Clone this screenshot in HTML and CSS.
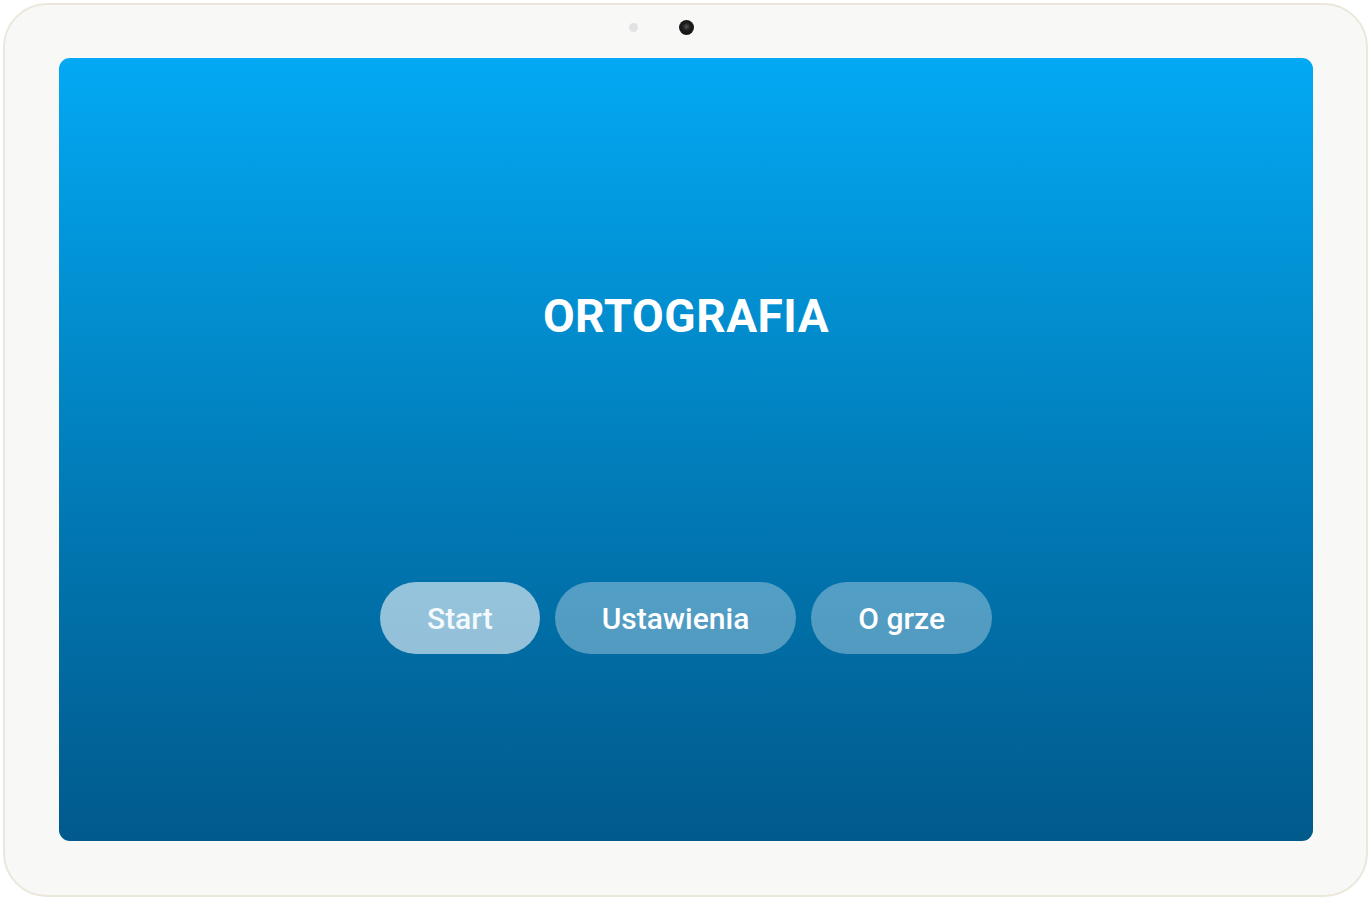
FILE: index.html
```html
<!DOCTYPE html>
<html lang="pl">
<head>
<meta charset="utf-8">
<title>Ortografia</title>
<link rel="stylesheet" href="styles.css">
</head>
<body>
<div class="tablet">
  <div class="bezel-top">
    <span class="sensor"></span>
    <span class="camera"></span>
    <span class="spacer"></span>
  </div>
  <main class="screen">
    <h1 class="title">ORTOGRAFIA</h1>
    <div class="menu">
      <button class="btn btn-primary">Start</button>
      <button class="btn">Ustawienia</button>
      <button class="btn">O grze</button>
    </div>
  </main>
</div>
</body>
</html>
```
FILE: styles.css
```css
* { box-sizing: border-box; }
html, body { margin: 0; padding: 0; background: #ffffff; }
body { font-family: Roboto, "Noto Sans", sans-serif; width: 1371px; height: 900px; }

.tablet {
  margin: 3px;
  width: 1365px;
  height: 894px;
  border-radius: 44px;
  border: 2px solid #ebe7db;
  background: #f8f8f7;
  padding: 0 53px 54px 54px;
  display: flex;
  flex-direction: column;
}

.bezel-top {
  height: 44px;
  margin-bottom: 9px;
  display: flex;
  align-items: center;
  justify-content: center;
  gap: 41px;
}
.sensor, .spacer { width: 9px; height: 9px; border-radius: 50%; background: #e2e2e2; }
.spacer { visibility: hidden; }
.camera {
  width: 15px; height: 15px; border-radius: 50%;
  background: radial-gradient(circle at 50% 45%, #555 0, #1c1c1c 35%, #111 100%);
}

.screen {
  flex: 1;
  border-radius: 11px;
  background: linear-gradient(180deg, #03a9f4 0%, #0290d2 30%, #0173ad 65%, #015a8c 100%);
  display: flex;
  flex-direction: column;
  align-items: center;
  padding-top: 233px;
}

.title {
  margin: 0;
  color: #ffffff;
  font-size: 46px;
  line-height: 50px;
  font-weight: 700;
  letter-spacing: 0.5px;
}

.menu {
  margin-top: 241px;
  display: flex;
  gap: 15px;
}

.btn {
  height: 72px;
  padding: 0 47px;
  border: none;
  border-radius: 36px;
  background: rgba(255, 255, 255, 0.32);
  color: #ffffff;
  font-family: Roboto, "Noto Sans", sans-serif;
  font-size: 30px;
  font-weight: 500;
  letter-spacing: 0;
}
.btn-primary {
  background: rgba(255, 255, 255, 0.58);
  color: #f4fafd;
}
```
